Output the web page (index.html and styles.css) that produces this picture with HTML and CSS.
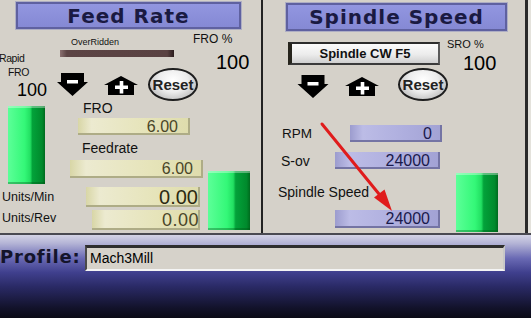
FILE: index.html
```html
<!DOCTYPE html>
<html lang="en">
<head>
    <meta charset="UTF-8">
    <title>Mach3 - Feed Rate / Spindle Speed</title>
    <link rel="stylesheet" href="styles.css">
</head>
<body>
<div class="screen">
    <div class="panels">
        <!-- Feed rate panel -->
        <section class="panel panel-feed">
            <div class="title title-feed">Feed Rate</div>
            <div class="feed-body">
                <div class="col-rapid">
                    <div class="rapid-label">Rapid</div>
                    <div class="rapid-label rapid-fro">FRO</div>
                    <div class="big-num rapid-num">100</div>
                    <div class="led led-rapid"></div>
                    <div class="unit-label unit-min">Units/Min</div>
                    <div class="unit-label unit-rev">Units/Rev</div>
                </div>
                <div class="col-feed">
                    <div class="over-label">OverRidden</div>
                    <div class="over-bar"></div>
                    <div class="jog-row">
                        <svg class="jog-down" viewBox="0 0 31 23"><path d="M4 0H27V9H31L15.5 23L0 9H4Z" fill="#000"/><rect x="10" y="7" width="11" height="3.5" fill="#fff"/></svg>
                        <svg class="jog-up" viewBox="0 0 34 19"><path d="M17 0L34 9H30V19H4V9H0Z" fill="#000"/><rect x="11" y="9.5" width="13" height="3.5" fill="#fff"/><rect x="15.7" y="5" width="3.6" height="12.5" fill="#fff"/></svg>
                        <div class="reset-btn">Reset</div>
                    </div>
                    <div class="field-label fro-label">FRO</div>
                    <div class="dro dro-yellow dro-fro">6.00</div>
                    <div class="field-label feedrate-label">Feedrate</div>
                    <div class="dro dro-yellow dro-feedrate">6.00</div>
                    <div class="dro dro-yellow dro-umin">0.00</div>
                    <div class="dro dro-yellow dro-urev">0.00</div>
                </div>
                <div class="col-fro">
                    <div class="pct-label">FRO %</div>
                    <div class="big-num fro-num">100</div>
                    <div class="led led-feed"></div>
                </div>
            </div>
        </section>

        <!-- Spindle panel -->
        <section class="panel panel-spindle">
            <div class="title title-spindle">Spindle Speed</div>
            <div class="spin-top">
                <div class="spindle-btn">Spindle CW F5</div>
                <div class="sro">
                    <div class="sro-label">SRO %</div>
                    <div class="big-num sro-num">100</div>
                </div>
            </div>
            <div class="spin-jog">
                <svg class="jog-down" viewBox="0 0 31 23"><path d="M4 0H27V9H31L15.5 23L0 9H4Z" fill="#000"/><rect x="10" y="7" width="11" height="3.5" fill="#fff"/></svg>
                <svg class="jog-up" viewBox="0 0 34 19"><path d="M17 0L34 9H30V19H4V9H0Z" fill="#000"/><rect x="11" y="9.5" width="13" height="3.5" fill="#fff"/><rect x="15.7" y="5" width="3.6" height="12.5" fill="#fff"/></svg>
                <div class="reset-btn">Reset</div>
            </div>
            <div class="spin-lower">
                <div class="spin-fields">
                    <div class="spin-row row-rpm">
                        <div class="spin-label">RPM</div>
                        <div class="dro dro-blue">0</div>
                    </div>
                    <div class="spin-row row-sov">
                        <div class="spin-label">S-ov</div>
                        <div class="dro dro-blue">24000</div>
                    </div>
                    <div class="spin-label speed-label">Spindle Speed</div>
                    <div class="dro dro-blue dro-speed">24000</div>
                </div>
                <div class="led led-spindle"></div>
            </div>
            <svg class="red-arrow" viewBox="0 0 80 100">
                <line x1="4" y1="6" x2="61" y2="76" stroke="#e01c1c" stroke-width="3" stroke-linecap="round"/>
                <path d="M74 93L56 79.5L66.5 71.5Z" fill="#e01c1c"/>
            </svg>
        </section>
    </div>

    <div class="profile-bar">
        <div class="profile-label">Profile:</div>
        <div class="profile-input">Mach3Mill</div>
    </div>
</div>
</body>
</html>
```

FILE: styles.css
```css
* {
    margin: 0;
    padding: 0;
    box-sizing: border-box;
}

body {
    width: 531px;
    height: 318px;
    overflow: hidden;
    font-family: 'Liberation Sans', Arial, sans-serif;
    color: #111;
    background-color: #e4e2dc;
}

.screen {
    display: flex;
    flex-direction: column;
    height: 318px;
}

.panels {
    display: flex;
    height: 235px;
    border-bottom: 2px solid #4a4a52;
}

.panel {
    background-color: #d5d1c9;
    height: 233px;
}

.panel-feed {
    width: 263px;
    border-right: 2px solid #222;
}

.panel-spindle {
    position: relative;
    width: 265px;
    border-right: 3px solid #2a2a2a;
}

/* titles */
.title {
    height: 27px;
    background: linear-gradient(#9296e0, #8589d4);
    border: 2px solid #5f61a0;
    box-shadow: 0 0 0 1px #aeaec4;
    font-family: 'DejaVu Sans', Verdana, sans-serif;
    font-weight: bold;
    font-size: 20px;
    letter-spacing: 1px;
    color: #1a1a42;
    display: flex;
    align-items: center;
    justify-content: center;
}

.title-feed {
    width: 225px;
    margin: 2px 0 0 16px;
}

.title-spindle {
    width: 221px;
    height: 28px;
    margin: 3px 0 0 23px;
}

.big-num {
    font-size: 20px;
    line-height: 20px;
    color: #000;
}

/* feed rate panel */
.feed-body {
    display: flex;
    align-items: flex-start;
}

.col-rapid {
    width: 56px;
    display: flex;
    flex-direction: column;
    align-items: flex-start;
}

.rapid-label {
    font-size: 10.5px;
    line-height: 11px;
    letter-spacing: -0.4px;
    margin: 24px 0 0 -1px;
}

.rapid-fro {
    margin: 3px 0 0 8px;
}

.rapid-num {
    font-size: 18px;
    line-height: 18px;
    margin: 3px 0 0 17px;
}

.led {
    background: linear-gradient(to right, #5cff98 0%, #34f878 45%, #22e062 60%, #03a23a 66%, #008a2c 92%, #006a1e 100%);
    box-shadow: inset 0 2px 0 rgba(255, 255, 255, 0.35), inset 0 -2px 0 rgba(0, 80, 20, 0.35);
}

.led-rapid {
    width: 37px;
    height: 78px;
    margin: 7px 0 0 8px;
}

.unit-label {
    font-size: 12.5px;
    line-height: 13px;
    margin: 7px 0 0 2px;
}

.unit-rev {
    margin-top: 8px;
}

.col-feed {
    width: 149px;
    display: flex;
    flex-direction: column;
    align-items: flex-start;
}

.over-label {
    font-size: 9px;
    line-height: 10px;
    margin: 8px 0 0 15px;
}

.over-bar {
    width: 114px;
    height: 7px;
    margin: 3px 0 0 4px;
    background: linear-gradient(to right, #8a7070 0%, #5c4444 6%, #5a4242 94%, #2a1c1c 100%);
}

.jog-row {
    display: flex;
    align-items: flex-start;
    height: 36px;
    margin-top: 8px;
}

.jog-down {
    width: 31px;
    height: 23px;
    margin: 8px 0 0 1px;
}

.jog-up {
    width: 34px;
    height: 19px;
    margin: 11px 0 0 16px;
}

.reset-btn {
    width: 50px;
    height: 33px;
    margin: 3px 0 0 10px;
    border: 2px solid #1e1e1e;
    border-radius: 50%;
    background: radial-gradient(ellipse at 50% 35%, #ffffff 0%, #ececec 45%, #b8b8b8 85%, #8c8c8c 100%);
    font-weight: bold;
    font-size: 15px;
    color: #222;
    display: flex;
    align-items: center;
    justify-content: center;
}

.field-label {
    font-size: 14px;
    line-height: 14px;
}

.fro-label {
    margin-left: 27px;
}

.feedrate-label {
    margin: 6px 0 0 26px;
}

.dro {
    display: flex;
    align-items: center;
    justify-content: flex-end;
    font-size: 16px;
}

.dro-yellow {
    background: linear-gradient(to right, #d8d6a6 0%, #ecead0 12%, #e6e4ba 60%, #dedcac 100%);
    box-shadow: inset -2px -2px 0 #aeac86;
    color: #4a4628;
}

.dro-fro {
    width: 112px;
    height: 17px;
    margin: 3px 0 0 22px;
    padding-right: 12px;
}

.dro-feedrate {
    width: 133px;
    height: 18px;
    margin: 5px 0 0 14px;
    padding-right: 10px;
}

.dro-umin {
    width: 114px;
    height: 20px;
    margin: 9px 0 0 30px;
    padding-right: 2px;
    font-size: 20px;
    color: #2c2a12;
}

.dro-urev {
    width: 108px;
    height: 20px;
    margin: 3px 0 0 36px;
    padding-right: 1px;
    font-size: 18px;
    letter-spacing: 0.5px;
}

.col-fro {
    display: flex;
    flex-direction: column;
    align-items: flex-start;
}

.pct-label {
    font-size: 12px;
    line-height: 12px;
    margin: 4px 0 0 -12px;
    white-space: nowrap;
}

.fro-num {
    margin: 7px 0 0 11px;
}

.led-feed {
    width: 42px;
    height: 59px;
    margin: 99px 0 0 3px;
}

/* spindle panel */
.spin-top {
    display: flex;
    align-items: flex-start;
    height: 35px;
}

.spindle-btn {
    width: 152px;
    height: 23px;
    margin: 11px 0 0 25px;
    border-left: 4px solid #26241c;
    border-top: 2px solid #2c2c2c;
    border-right: 2px solid #5a5a5a;
    border-bottom: 2px solid #3a3a3a;
    background: linear-gradient(#fbfbfb, #ececec 55%, #cfcfcf);
    font-weight: bold;
    font-size: 13px;
    display: flex;
    align-items: center;
    justify-content: center;
}

.sro {
    margin-left: 7px;
}

.sro-label {
    font-size: 11px;
    line-height: 11px;
    margin-top: 8px;
}

.sro-num {
    margin: 3px 0 0 16px;
}

.spin-jog {
    display: flex;
    align-items: flex-start;
    height: 35px;
}

.spin-jog .jog-down {
    width: 32px;
    margin: 9px 0 0 34px;
}

.spin-jog .jog-up {
    margin: 11px 0 0 16px;
}

.spin-jog .reset-btn {
    margin: 2px 0 0 19px;
}

.spin-lower {
    display: flex;
    align-items: flex-start;
}

.spin-fields {
    width: 182px;
    display: flex;
    flex-direction: column;
    align-items: flex-start;
}

.spin-row {
    display: flex;
    align-items: center;
    height: 17px;
}

.row-rpm {
    margin-top: 24px;
}

.row-sov {
    margin-top: 10px;
}

.spin-label {
    font-size: 14px;
    line-height: 14px;
}

.row-rpm .spin-label {
    width: 68px;
    margin-left: 19px;
    font-size: 13.5px;
}

.row-sov .spin-label {
    width: 54px;
    margin-left: 18px;
}

.dro-blue {
    height: 17px;
    width: 105px;
    padding-right: 10px;
    background: linear-gradient(to right, #9c9cce 0%, #bcbce6 14%, #aeaede 60%, #a2a2d4 100%);
    box-shadow: inset -2px -2px 0 #7474a4;
    color: #1a1a4c;
}

.row-rpm .dro-blue {
    width: 92px;
}

.speed-label {
    margin: 16px 0 0 15px;
}

.dro-speed {
    height: 18px;
    margin: 11px 0 0 72px;
}

.led-spindle {
    width: 42px;
    height: 59px;
    margin: 72px 0 0 11px;
}

.red-arrow {
    position: absolute;
    left: 55px;
    top: 118px;
    width: 80px;
    height: 100px;
}

/* profile bar */
.profile-bar {
    flex: 1;
    display: flex;
    align-items: flex-start;
    background: linear-gradient(#d4d4e6 0%, #b4b4d6 10%, #6a6ab4 28%, #40408e 45%, #2a2a66 62%, #12122a 88%, #0a0a16 100%);
}

.profile-label {
    width: 85px;
    margin-top: 13px;
    font-family: 'DejaVu Sans', Verdana, sans-serif;
    font-weight: bold;
    font-size: 18px;
    line-height: 18px;
    letter-spacing: 0.8px;
    color: #14142a;
    white-space: nowrap;
}

.profile-input {
    width: 420px;
    height: 26px;
    margin-top: 10px;
    padding: 3px 0 0 3px;
    background-color: #d6d2ca;
    border-top: 3px solid #2e2e2e;
    border-left: 2px solid #4a4a4a;
    border-right: 2px solid #c8c8c8;
    border-bottom: 2px solid #f4f4f4;
    font-size: 14px;
    line-height: 14px;
    color: #000;
}
```
